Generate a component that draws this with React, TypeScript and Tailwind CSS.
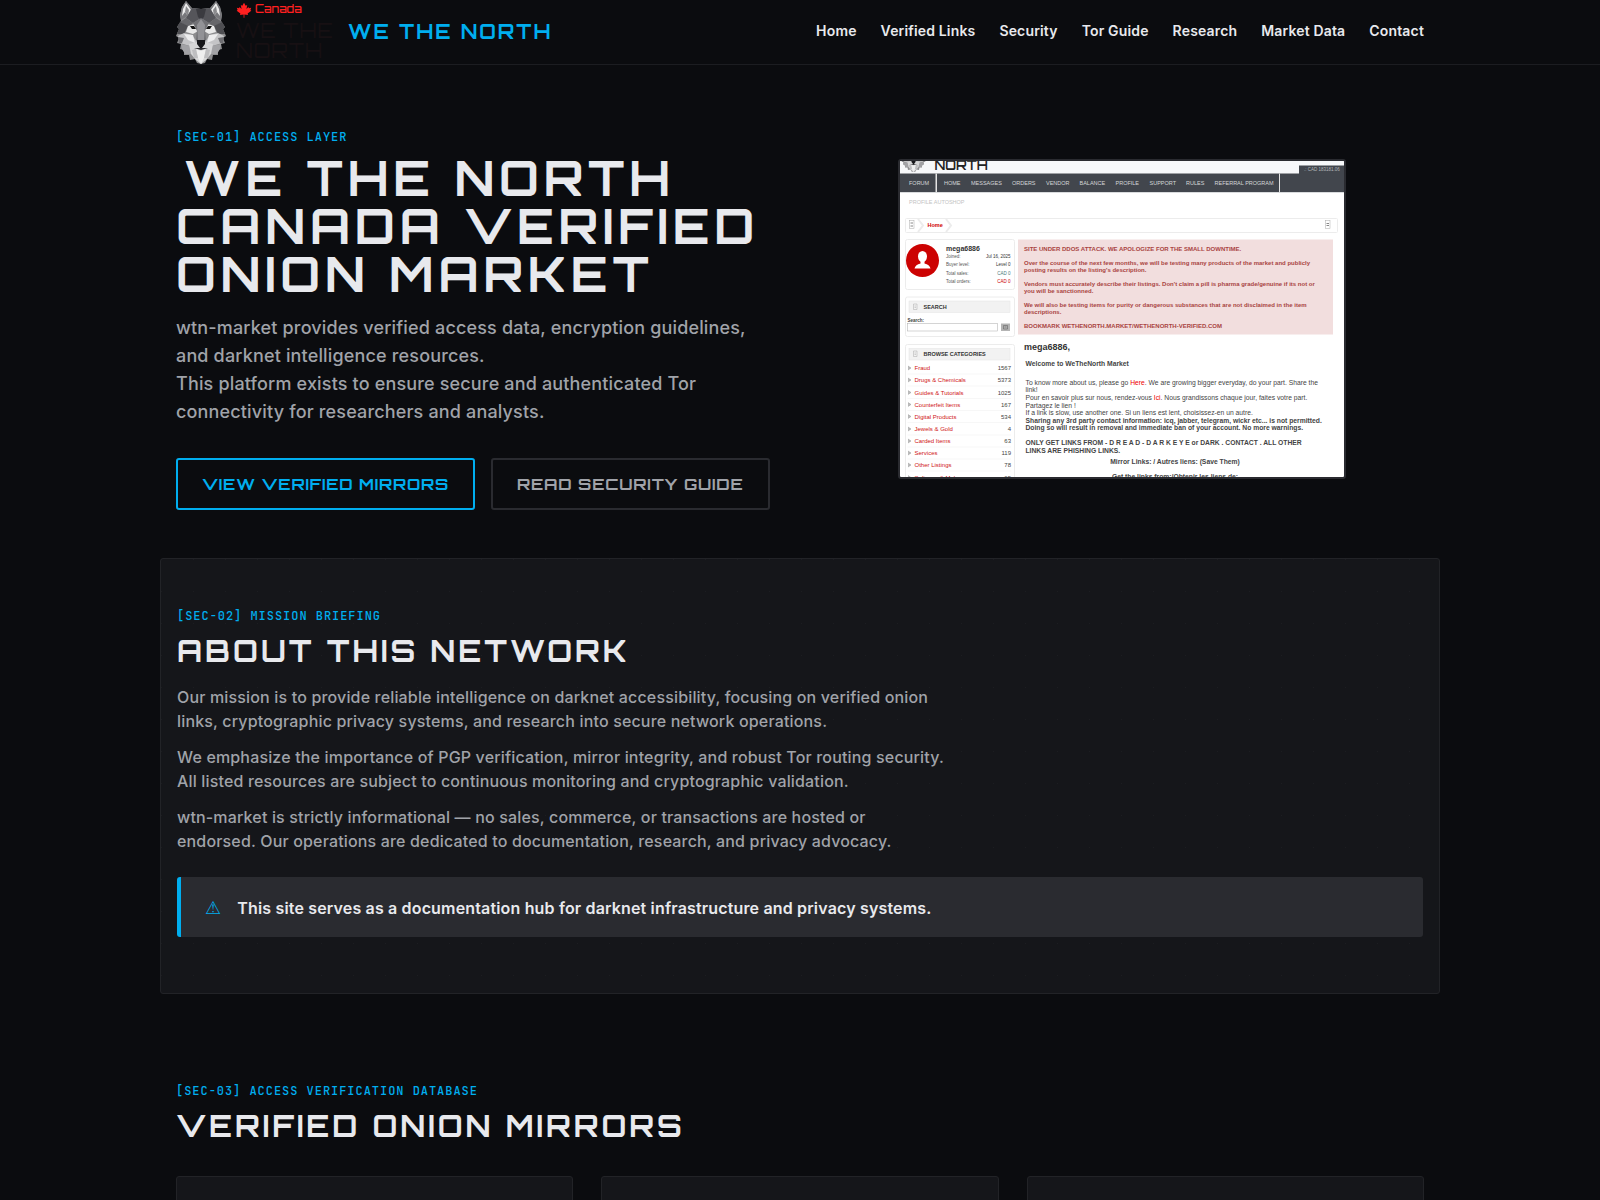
import type { ReactNode } from "react";

const navLinks = ["Home", "Verified Links", "Security", "Tor Guide", "Research", "Market Data", "Contact"];

const display = "font-['Orbitron','DejaVu_Sans',sans-serif] font-bold uppercase";

const previewNav = [
  { label: "FORUM", x: 18 },
  { label: "HOME", x: 88 },
  { label: "MESSAGES", x: 142 },
  { label: "ORDERS", x: 224 },
  { label: "VENDOR", x: 292 },
  { label: "BALANCE", x: 359 },
  { label: "PROFILE", x: 431 },
  { label: "SUPPORT", x: 499 },
  { label: "RULES", x: 572 },
  { label: "REFERRAL PROGRAM", x: 629 },
];

const profileRows = [
  { label: "Joined:", value: "Jul 16, 2025", y: 194, fill: "#333" },
  { label: "Buyer level:", value: "Level 0", y: 210, fill: "#333" },
  { label: "Total sales:", value: "CAD 0", y: 227, fill: "#4a7a7a" },
  { label: "Total orders:", value: "CAD 0", y: 243, fill: "#c00" },
];

const categories = [
  { label: "Fraud", count: "1567" },
  { label: "Drugs & Chemicals", count: "5373" },
  { label: "Guides & Tutorials", count: "1025" },
  { label: "Counterfeit Items", count: "167" },
  { label: "Digital Products", count: "534" },
  { label: "Jewels & Gold", count: "4" },
  { label: "Carded Items", count: "63" },
  { label: "Services", count: "119" },
  { label: "Other Listings", count: "78" },
  { label: "Software & Malware", count: "65" },
];

const notices = [
  { text: "SITE UNDER DDOS ATTACK. WE APOLOGIZE FOR THE SMALL DOWNTIME.", y: 180 },
  { text: "Over the course of the next few months, we will be testing many products of the market and publicly", y: 208 },
  { text: "posting results on the listing's description.", y: 222 },
  { text: "Vendors must accurately describe their listings. Don't claim a pill is pharma grade/genuine if its not or", y: 249 },
  { text: "you will be sanctionned.", y: 263 },
  { text: "We will also be testing items for purity or dangerous substances that are not disclaimed in the item", y: 291 },
  { text: "descriptions.", y: 305 },
  { text: "BOOKMARK WETHENORTH.MARKET/WETHENORTH-VERIFIED.COM", y: 333 },
];

function WolfShapes() {
  return (
    <g>
      <path d="M10 1 L6 7 L4 15 L5 21 L1 27 L3 29 L0 36 L3 38 L1 43 L5 44 L4 49 L8 50 L8 55 L13 55 L14 60 L19 59 L21 63 L25 64 L29 63 L31 59 L36 60 L37 55 L42 55 L42 50 L46 49 L45 44 L49 43 L47 38 L50 36 L47 29 L49 27 L45 21 L46 15 L44 7 L40 1 L34 8 L25 9 L16 8 Z" fill="#8c8c8e" />
      <path d="M10 1 L6 7 L4 15 L5 20 L10 17 L16 9 Z" fill="#77777b" />
      <path d="M40 1 L44 7 L46 15 L45 20 L40 17 L34 9 Z" fill="#77777b" />
      <path d="M10 3 L7 9 L6 16 L9 12 L12 16 L15 10 Z" fill="#ededed" />
      <path d="M40 3 L43 9 L44 16 L41 12 L38 16 L35 10 Z" fill="#ededed" />
      <path d="M10 6 L9 12 L12 16 L13 10 Z" fill="#8a8a8d" />
      <path d="M40 6 L41 12 L38 16 L37 10 Z" fill="#8a8a8d" />
      <path d="M16 8 L25 9 L34 8 L40 18 L33 23 L25 18 L17 23 L10 18 Z" fill="#55555a" />
      <path d="M20 9 L25 9 L30 9 L28 17 L25 20 L22 17 Z" fill="#3b3b40" />
      <path d="M10 18 L17 23 L12 27 L4 22 Z" fill="#66666a" />
      <path d="M40 18 L33 23 L38 27 L46 22 Z" fill="#66666a" />
      <path d="M4 22 L12 26 L8 34 L1 34 L3 29 L1 27 Z" fill="#4e4e52" />
      <path d="M46 22 L38 26 L42 34 L49 34 L47 29 L49 27 Z" fill="#4e4e52" />
      <path d="M12 26 L19 24 L22 31 L17 34 L10 32 Z" fill="#e9e9e9" />
      <path d="M38 26 L31 24 L28 31 L33 34 L40 32 Z" fill="#e9e9e9" />
      <path d="M17 23 L25 18 L33 23 L29 31 L30 40 L20 40 L21 31 Z" fill="#717175" />
      <path d="M25 19 L29 25 L28 40 L22 40 L21 25 Z" fill="#929296" />
      <path d="M2 36 L8 33 L16 35 L21 42 L14 46 L4 43 Z" fill="#c4c4c6" />
      <path d="M48 36 L42 33 L34 35 L29 42 L36 46 L46 43 Z" fill="#c4c4c6" />
      <path d="M8 34 L17 35 L19 43 L12 40 Z" fill="#ececed" />
      <path d="M42 34 L33 35 L31 43 L38 40 Z" fill="#ececed" />
      <path d="M2 37 L8 38 L6 43 L3 43 Z" fill="#6e6e72" />
      <path d="M48 37 L42 38 L44 43 L47 43 Z" fill="#6e6e72" />
      <path d="M5 44 L14 46 L16 54 L9 54 L6 49 Z" fill="#a2a2a5" />
      <path d="M45 44 L36 46 L34 54 L41 54 L44 49 Z" fill="#a2a2a5" />
      <path d="M13 44 L21 42 L25 48 L29 42 L37 44 L35 54 L30 60 L25 64 L20 60 L15 54 Z" fill="#d6d6d7" />
      <path d="M20 49 L25 51 L30 49 L28 58 L25 64 L22 58 Z" fill="#efefef" />
      <path d="M16 50 L20 49 L22 58 L18 58 Z" fill="#bebec0" />
      <path d="M34 50 L30 49 L28 58 L32 58 Z" fill="#bebec0" />
      <path d="M14 26 L18 26 L20 29 L16 29 Z" fill="#111" />
      <path d="M36 26 L32 26 L30 29 L34 29 Z" fill="#111" />
      <path d="M21 40 L29 40 L29 44 L26 48 L24 48 L21 44 Z" fill="#17171a" />
      <path d="M18 48 L25 48 L32 48 L25 50 Z" fill="#2a2a2d" />
    </g>
  );
}

function Logo() {
  return (
    <div className="flex h-16 items-start gap-2.5">
      <svg viewBox="0 0 50 64" className="h-16 w-[50px]" aria-hidden="true">
        <WolfShapes />
      </svg>
      <div className="w-[100px] font-['Orbitron','DejaVu_Sans',sans-serif] tracking-normal">
        <div className="flex h-[19px] items-center gap-[3px] text-[11px] font-medium text-[#ff2020]">
          <svg viewBox="0 0 24 24" className="size-4" fill="currentColor" aria-hidden="true">
            <path d="M12 1 L9.5 5.5 L7.2 4.4 L8.3 10.4 L5.3 7.4 L4.6 9.2 L1.2 8.6 L2.4 12 L1 13 L6.6 17.3 L6 19.5 L11.4 18.6 L11.4 23.5 L12.6 23.5 L12.6 18.6 L18 19.5 L17.4 17.3 L23 13 L21.6 12 L22.8 8.6 L19.4 9.2 L18.7 7.4 L15.7 10.4 L16.8 4.4 L14.5 5.5 Z" />
          </svg>
          Canada
        </div>
        <div className="pt-[2px] text-[20px] leading-5 tracking-wider whitespace-nowrap text-[#171013]">
          WE THE
          <br />
          NORTH
        </div>
      </div>
    </div>
  );
}

function MarketPreview() {
  return (
    <svg
      viewBox="0 0 888 632"
      role="img"
      aria-label="Market home page preview"
      className="block h-auto w-full bg-white font-['Liberation_Sans',Arial,sans-serif] tracking-normal"
    >
      <rect width="888" height="25" fill="#f7f8fa" />
      <g transform="translate(2 -42)">
        <WolfShapes />
      </g>
      <text x="69" y="18" fontSize="26" fontWeight="600" fill="#222" className="font-['Orbitron','DejaVu_Sans',sans-serif]">NORTH</text>
      <path d="M0 25 H798 V9 H888 V62 H0 Z" fill="#42464d" />
      <rect y="62" width="888" height="2" fill="#d9dbdd" />
      <rect x="71" y="25" width="3" height="37" fill="#e4e4e4" />
      <rect x="758" y="25" width="2" height="37" fill="#e4e4e4" />
      <text x="808" y="19" fontSize="9" fill="#b5b8bb">.: CAD 183181.06</text>
      <g fontSize="11" fill="#d4d6d8">
        {previewNav.map((item) => (
          <text key={item.label} x={item.x} y="47">{item.label}</text>
        ))}
      </g>
      <text x="18" y="85" fontSize="11" fill="#c3c3c3">PROFILE AUTOSHOP</text>

      <g fill="none" stroke="#ececec" strokeWidth="2">
        <rect x="11" y="115" width="864" height="28" rx="2" />
        <path d="M36 116 L46 129 L36 142 M92 116 L102 129 L92 142" strokeWidth="4" />
        <rect x="11" y="157" width="218" height="100" rx="4" />
        <rect x="11" y="272" width="218" height="79" rx="4" />
        <rect x="11" y="367" width="218" height="280" rx="4" />
      </g>
      <g fill="#fff" stroke="#aaa">
        <rect x="19" y="119" width="9" height="16" />
        <rect x="851" y="119" width="9" height="16" />
      </g>
      <path d="M21 124 H26 M21 130 H26 M853 125 H858 M853 129 H858" stroke="#888" strokeWidth="2" />
      <text x="55" y="132" fontSize="11" fontWeight="700" fill="#d00000">Home</text>

      <circle cx="45" cy="199" r="33" fill="#cc0202" />
      <ellipse cx="45" cy="191" rx="9" ry="11" fill="#fff" />
      <path d="M29 215 Q31 207 41 205 V200 H49 V205 Q59 207 61 215 Z" fill="#fff" />
      <text x="92" y="179" fontSize="14" fontWeight="700" fill="#333">mega6886</text>
      <g fontSize="9">
        {profileRows.map((row) => (
          <g key={row.label}>
            <text x="92" y={row.y} fill="#555">{row.label}</text>
            <text x="221" y={row.y} textAnchor="end" fill={row.fill}>{row.value}</text>
          </g>
        ))}
      </g>

      <g fill="#f2f2f2" stroke="#e4e4e4">
        <rect x="18" y="280" width="202" height="23" />
        <rect x="18" y="375" width="202" height="23" />
      </g>
      <path d="M27 286 H34 V297 H27 Z M29 290 H32 M29 293 H32 M27 380 H34 V391 H27 Z M29 384 H32 M29 387 H32" fill="none" stroke="#aaa" />
      <text x="47" y="295" fontSize="11" fontWeight="700" fill="#333">SEARCH</text>
      <text x="15" y="321" fontSize="9" fontWeight="700" fill="#444">Search:</text>
      <rect x="15" y="325" width="180" height="15" fill="#fff" stroke="#aaa" />
      <rect x="202" y="325" width="18" height="15" fill="#b4b4b4" />
      <path d="M207 329 H215 V336 H207 Z M209 332 H213" fill="none" stroke="#555" />

      <text x="47" y="389" fontSize="11" fontWeight="700" fill="#333">BROWSE CATEGORIES</text>
      <g fontSize="12">
        {categories.map((c, i) => {
          const y = 418 + Math.round(i * 24.3);
          return (
            <g key={c.label}>
              <path d={`M16 ${y - 8} L22 ${y - 4} L16 ${y}`} fill="#bbb" stroke="#999" />
              <text x="29" y={y} fill="#d01414">{c.label}</text>
              <text x="222" y={y} textAnchor="end" fill="#444">{c.count}</text>
              <path d={`M15 ${y + 8} H222`} stroke="#eee" />
            </g>
          );
        })}
      </g>

      <rect x="236" y="157" width="630" height="190" fill="#f2dede" />
      <g fontSize="12" fontWeight="700" fill="#a94442">
        {notices.map((n) => (
          <text key={n.y} x="248" y={n.y}>{n.text}</text>
        ))}
      </g>

      <text x="248" y="378" fontSize="18" fontWeight="700" fill="#333">mega6886,</text>
      <g fontSize="13.5" fill="#444">
        <text x="251" y="410" fontWeight="700">Welcome to WeTheNorth Market</text>
        <text x="251" y="447">
          To know more about us, please go <tspan fill="#e00">Here</tspan>. We are growing bigger everyday, do your part. Share the
        </text>
        <text x="251" y="462">link!</text>
        <text x="251" y="477">
          Pour en savoir plus sur nous, rendez-vous <tspan fill="#e00">Ici</tspan>. Nous grandissons chaque jour, faites votre part.
        </text>
        <text x="251" y="493">Partagez le lien !</text>
        <text x="251" y="507">If a link is slow, use another one. Si un liens est lent, choisissez-en un autre.</text>
        <g fontWeight="700">
          <text x="251" y="523">Sharing any 3rd party contact information: icq, jabber, telegram, wickr etc... is not permitted.</text>
          <text x="251" y="538">Doing so will result in removal and immediate ban of your account. No more warnings.</text>
          <text x="251" y="567">ONLY GET LINKS FROM - D R E A D - D A R K E Y E or DARK . CONTACT . ALL OTHER</text>
          <text x="251" y="583">LINKS ARE PHISHING LINKS.</text>
          <text x="550" y="606" textAnchor="middle">Mirror Links: / Autres liens: (Save Them)</text>
          <text x="550" y="635" textAnchor="middle">Get the links from:/Obtenir les liens de:</text>
        </g>
      </g>
    </svg>
  );
}

function SectionLabel({ children }: { children: ReactNode }) {
  return (
    <p className="font-['JetBrains_Mono','DejaVu_Sans_Mono',monospace] text-xs leading-5 font-medium tracking-[0.08em] text-[#00aeef] uppercase">
      {children}
    </p>
  );
}

function SectionTitle({ children }: { children: ReactNode }) {
  return <h2 className={`${display} mt-[5px] text-[30px] leading-10 tracking-widest`}>{children}</h2>;
}

export default function App() {
  return (
    <div className="h-screen overflow-hidden bg-[#0b0c0f] font-['Inter',sans-serif] tracking-[0.01em] text-[#e8e9ed]">
      <header className="border-b border-[#1c1d21]">
        <div className="mx-auto flex h-16 max-w-[1280px] items-center justify-between px-4">
          <a href="#home" className="flex items-center gap-3">
            <Logo />
            <span className={`${display} text-xl tracking-widest text-[#00aeef]`}>We The North</span>
          </a>
          <nav className="flex gap-6 pb-[2px] text-sm font-semibold">
            {navLinks.map((label) => (
              <a key={label} href="#top" className="hover:text-[#00aeef]">
                {label}
              </a>
            ))}
          </nav>
        </div>
      </header>

      <main>
        <section className="mx-auto grid max-w-[1280px] grid-cols-2 items-center gap-10 px-4 pt-[62px] pb-12">
          <div>
            <SectionLabel>[SEC-01] Access Layer</SectionLabel>
            <h1 className={`${display} mt-[7px] text-5xl leading-12 tracking-widest`}>
              <span className="ml-2">We The North</span>
              <br />
              Canada Verified
              <br />
              Onion Market
            </h1>
            <p className="mt-4 text-lg leading-7 font-medium text-[#a0a3a9]">
              wtn-market provides verified access data, encryption guidelines, and darknet intelligence resources.
              <br />
              This platform exists to ensure secure and authenticated Tor connectivity for researchers and analysts.
            </p>
            <div className="mt-8 flex gap-4 text-[16px] leading-6 tracking-wider whitespace-nowrap">
              <a href="#mirrors" className={`${display} rounded-[3px] border-2 border-[#00aeef] px-6 py-3 text-[#00aeef]`}>
                View Verified Mirrors
              </a>
              <a href="#security" className={`${display} rounded-[3px] border-2 border-[#2a2b30] px-6 py-3 text-[#a0a3a9]`}>
                Read Security Guide
              </a>
            </div>
          </div>
          <div className="mx-auto w-full max-w-md overflow-hidden rounded-[3px] border-2 border-[#2a2b30]">
            <MarketPreview />
          </div>
        </section>

        <section className="mx-auto max-w-[1280px] rounded-[3px] border border-[#222327] bg-[#15161a] bg-[radial-gradient(circle_at_0_0,#1c1d21_1px,transparent_1px)] bg-size-[32px_32px] px-4 pt-[47px] pb-14">
          <SectionLabel>[SEC-02] Mission Briefing</SectionLabel>
          <SectionTitle>About This Network</SectionTitle>
          <div className="mt-[14px] max-w-3xl space-y-3 text-base leading-6 font-medium text-[#a0a3a9]">
            <p>
              Our mission is to provide reliable intelligence on darknet accessibility, focusing on verified onion
              links, cryptographic privacy systems, and research into secure network operations.
            </p>
            <p>
              We emphasize the importance of PGP verification, mirror integrity, and robust Tor routing security. All
              listed resources are subject to continuous monitoring and cryptographic validation.
            </p>
            <p>
              wtn-market is strictly informational — no sales, commerce, or transactions are hosted or endorsed. Our
              operations are dedicated to documentation, research, and privacy advocacy.
            </p>
          </div>
          <div className="mt-6 flex items-center gap-4 rounded-[3px] border-l-4 border-[#00aeef] bg-[#2a2b30] px-6 pt-[19px] pb-[17px]">
            <span className="font-['DejaVu_Sans',sans-serif] text-[18px] leading-6 text-[#00aeef]">⚠</span>
            <p className="text-base leading-6 font-semibold">
              This site serves as a documentation hub for darknet infrastructure and privacy systems.
            </p>
          </div>
        </section>

        <section className="mx-auto max-w-[1280px] px-4 pt-[87px]">
          <SectionLabel>[SEC-03] Access Verification Database</SectionLabel>
          <SectionTitle>Verified Onion Mirrors</SectionTitle>
          <div className="mt-[30px] grid grid-cols-3 gap-7">
            <article className="h-60 rounded-[3px] border border-[#222327] bg-[#15161a]" />
            <article className="h-60 rounded-[3px] border border-[#222327] bg-[#15161a]" />
            <article className="h-60 rounded-[3px] border border-[#222327] bg-[#15161a]" />
          </div>
        </section>
      </main>
    </div>
  );
}
